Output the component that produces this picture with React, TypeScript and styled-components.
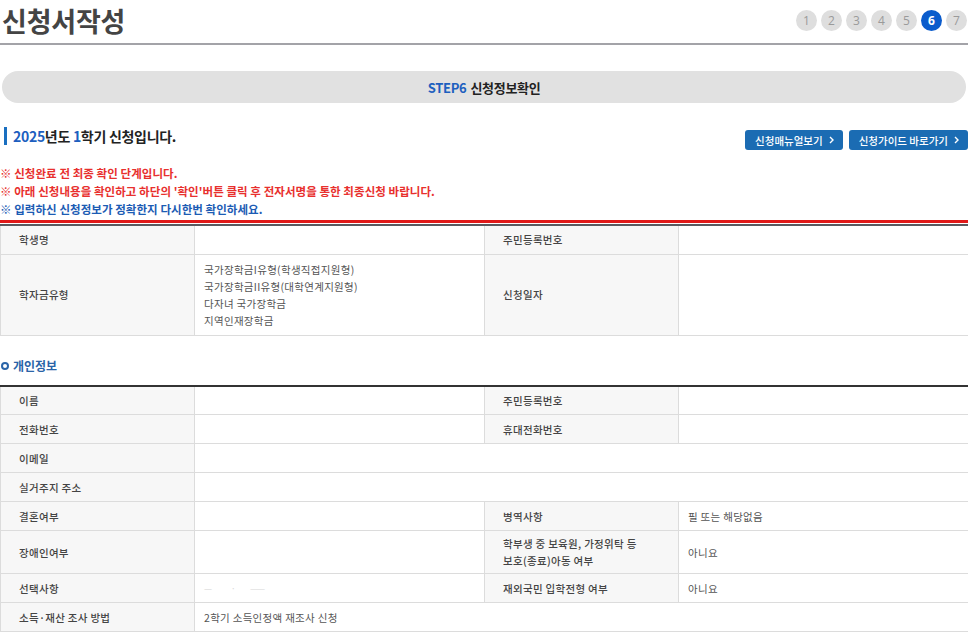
import React from "react";
import styled, { createGlobalStyle } from "styled-components";

const Global = createGlobalStyle`
  html, body { margin: 0; padding: 0; background: #fff; }
  body { font-family: "Noto Sans CJK KR", "Noto Sans", sans-serif; color: #333; overflow: hidden; }
  * { box-sizing: border-box; }
`;

const Page = styled.div`
  width: 968px;
  overflow: hidden;
`;

const TitleBar = styled.div`
  display: flex;
  justify-content: space-between;
  align-items: center;
  height: 45px;
  border-bottom: 2px solid #a3a3a8;
  padding-bottom: 2px;
`;

const Title = styled.h1`
  margin: 0 0 0 2px;
  font-size: 27px;
  font-weight: 700;
  color: #444;
  letter-spacing: -0.2px;
`;

const Steps = styled.ol`
  display: flex;
  gap: 4px;
  list-style: none;
  margin: 0 1px 0 0;
  padding: 0;
`;

const Step = styled.li<{ $active?: boolean }>`
  width: 21px;
  height: 21px;
  border-radius: 50%;
  display: flex;
  align-items: center;
  justify-content: center;
  font-family: "Open Sans", sans-serif;
  font-size: 12px;
  font-weight: ${(p) => (p.$active ? 700 : 400)};
  background: ${(p) => (p.$active ? "#0b5ccc" : "#dedede")};
  color: ${(p) => (p.$active ? "#fff" : "#9a9a9a")};
`;

const StepBanner = styled.div`
  margin: 26px 2px 0 2px;
  height: 32px;
  border-radius: 16px;
  background: #e1e1e1;
  display: flex;
  align-items: center;
  justify-content: center;
  font-size: 13px;
  font-weight: 700;
  color: #222;
  letter-spacing: -0.3px;
`;

const StepLabel = styled.span`
  color: #1d5fbf;
  margin-right: 4px;
`;

const HeadRow = styled.div`
  display: flex;
  justify-content: space-between;
  align-items: center;
  margin-top: 21px;
  height: 24px;
`;

const SemesterTitle = styled.h2`
  margin: 0 0 0 4px;
  border-left: 3px solid #1a6fc0;
  padding-left: 6px;
  font-size: 14px;
  line-height: 18px;
  font-weight: 700;
  color: #222;
  letter-spacing: -0.3px;
`;

const Blue = styled.span`
  color: #1d5fbf;
`;

const ButtonGroup = styled.div`
  display: flex;
  gap: 6px;
  margin-right: 0;
  margin-top: 8px;
`;

const LinkButton = styled.button`
  height: 20px;
  padding: 0 8px 0 10px;
  border: none;
  border-radius: 3px;
  background: #1b6cb3;
  color: #fff;
  font-family: "Noto Sans CJK KR", sans-serif;
  font-size: 10.5px;
  font-weight: 500;
  letter-spacing: 0;
  display: flex;
  align-items: center;
  gap: 6px;
`;

const Notices = styled.ul`
  list-style: none;
  margin: 16px 0 0 0;
  padding: 0;
`;

const Notice = styled.li<{ $tone: "red" | "blue" }>`
  font-size: 11.5px;
  line-height: 18px;
  font-weight: 700;
  letter-spacing: 0.05px;
  color: ${(p) => (p.$tone === "red" ? "#e8302e" : "#1c5cb4")};
`;

const Divider = styled.div`
  margin-top: 2px;
  height: 3px;
  background: #e01818;
  margin-bottom: 1px;
`;

const Table = styled.table<{ $topColor: string }>`
  width: 968px;
  border-collapse: collapse;
  table-layout: fixed;
  border-top: 2px solid ${(p) => p.$topColor};
`;

const Th = styled.th`
  background: #f7f7f7;
  border: 1px solid #dcdcdc;
  text-align: left;
  padding: 0 0 0 18px;
  font-size: 10.5px;
  line-height: 17px;
  font-weight: 500;
  color: #444;
  letter-spacing: 0.3px;
  vertical-align: middle;
`;

const Td = styled.td`
  border: 1px solid #dcdcdc;
  padding: 0 0 0 9px;
  font-size: 10.5px;
  line-height: 17px;
  color: #555;
  letter-spacing: 0.3px;
  vertical-align: middle;
`;

const Tr = styled.tr<{ $h?: number }>`
  height: ${(p) => p.$h ?? 29}px;
`;

const Lines = styled.div`
  padding: 6px 0;
`;

const Faint = styled.span`
  color: #d8d8d8;
  font-size: 9px;
`;

const SectionTitle = styled.h3`
  display: flex;
  align-items: center;
  gap: 4px;
  margin: 21px 0 10px 1px;
  font-size: 12px;
  line-height: 18px;
  font-weight: 700;
  color: #2a64a8;
`;

const Ring = styled.span`
  width: 8px;
  height: 8px;
  border: 2px solid #2a64a8;
  border-radius: 50%;
`;

const Chevron = () => (
  <svg width="6" height="8" viewBox="0 0 6 8">
    <path d="M1 1l3 3-3 3" stroke="#fff" strokeWidth="1.4" fill="none" />
  </svg>
);

const Cols = () => (
  <colgroup>
    <col style={{ width: 194 }} />
    <col style={{ width: 290 }} />
    <col style={{ width: 194 }} />
    <col style={{ width: 290 }} />
  </colgroup>
);

export default function App() {
  return (
    <Page>
      <Global />
      <TitleBar>
        <Title>신청서작성</Title>
        <Steps>
          {[1, 2, 3, 4, 5, 6, 7].map((n) => (
            <Step key={n} $active={n === 6}>
              {n}
            </Step>
          ))}
        </Steps>
      </TitleBar>

      <StepBanner>
        <StepLabel>STEP6</StepLabel>신청정보확인
      </StepBanner>

      <HeadRow>
        <SemesterTitle>
          <Blue>2025</Blue>년도 <Blue>1</Blue>학기 신청입니다.
        </SemesterTitle>
        <ButtonGroup>
          <LinkButton>
            신청매뉴얼보기 <Chevron />
          </LinkButton>
          <LinkButton>
            신청가이드 바로가기 <Chevron />
          </LinkButton>
        </ButtonGroup>
      </HeadRow>

      <Notices>
        <Notice $tone="red">※ 신청완료 전 최종 확인 단계입니다.</Notice>
        <Notice $tone="red">
          ※ 아래 신청내용을 확인하고 하단의 '확인'버튼 클릭 후 전자서명을 통한 최종신청 바랍니다.
        </Notice>
        <Notice $tone="blue">※ 입력하신 신청정보가 정확한지 다시한번 확인하세요.</Notice>
      </Notices>

      <Divider />

      <Table $topColor="#5a5a60">
        <Cols />
        <tbody>
          <Tr>
            <Th>학생명</Th>
            <Td></Td>
            <Th>주민등록번호</Th>
            <Td></Td>
          </Tr>
          <Tr $h={78}>
            <Th>학자금유형</Th>
            <Td>
              <Lines>
                국가장학금I유형(학생직접지원형)
                <br />
                국가장학금II유형(대학연계지원형)
                <br />
                다자녀 국가장학금
                <br />
                지역인재장학금
              </Lines>
            </Td>
            <Th>신청일자</Th>
            <Td></Td>
          </Tr>
        </tbody>
      </Table>

      <SectionTitle>
        <Ring />
        개인정보
      </SectionTitle>

      <Table $topColor="#333">
        <Cols />
        <tbody>
          <Tr>
            <Th>이름</Th>
            <Td></Td>
            <Th>주민등록번호</Th>
            <Td></Td>
          </Tr>
          <Tr>
            <Th>전화번호</Th>
            <Td></Td>
            <Th>휴대전화번호</Th>
            <Td></Td>
          </Tr>
          <Tr>
            <Th>이메일</Th>
            <Td colSpan={3}></Td>
          </Tr>
          <Tr>
            <Th>실거주지 주소</Th>
            <Td colSpan={3}></Td>
          </Tr>
          <Tr>
            <Th>결혼여부</Th>
            <Td></Td>
            <Th>병역사항</Th>
            <Td>필 또는 해당없음</Td>
          </Tr>
          <Tr $h={43}>
            <Th>장애인여부</Th>
            <Td></Td>
            <Th>
              학부생 중 보육원, 가정위탁 등
              <br />
              보호(종료)아동 여부
            </Th>
            <Td>아니요</Td>
          </Tr>
          <Tr>
            <Th>선택사항</Th>
            <Td>
              <Faint>—&nbsp;&nbsp;&nbsp;&nbsp;&nbsp;&nbsp;&nbsp;&nbsp;·&nbsp;&nbsp;&nbsp;&nbsp;&nbsp;&nbsp;——</Faint>
            </Td>
            <Th>재외국민 입학전형 여부</Th>
            <Td>아니요</Td>
          </Tr>
          <Tr>
            <Th>소득·재산 조사 방법</Th>
            <Td colSpan={3}>2학기 소득인정액 재조사 신청</Td>
          </Tr>
        </tbody>
      </Table>
    </Page>
  );
}
